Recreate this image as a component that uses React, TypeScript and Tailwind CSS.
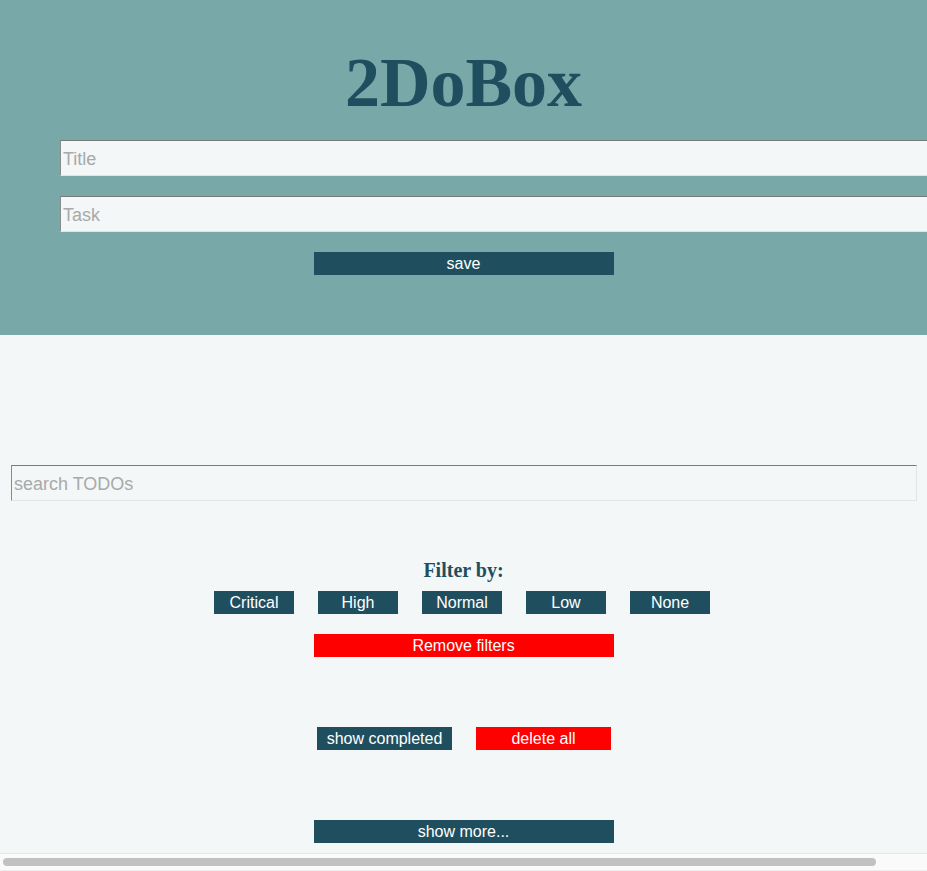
import React from "react";

const inputCls =
  "block h-[36px] bg-[#f3f7f7] border border-t-[#7a7a7a] border-l-[#8a8a8a] border-b-[#e4e4e4] border-r-[#e4e4e4] px-[2px] pt-[2px] text-[18px] text-[#333] placeholder:text-[#a9a9a9] outline-none font-['Liberation_Sans',Arial,sans-serif]";

const darkBtn =
  "h-[23px] bg-[#1f4f5f] text-white text-[16px] leading-[23px] text-center font-['Liberation_Sans',Arial,sans-serif]";
const redBtn =
  "h-[23px] bg-[#ff0000] text-white text-[16px] leading-[23px] text-center font-['Liberation_Sans',Arial,sans-serif]";

export default function App() {
  return (
    <div className="w-[927px] h-[871px] overflow-hidden bg-[#f3f7f7] flex flex-col">
      <header className="h-[335px] shrink-0 bg-[#78a8a8] flex flex-col overflow-hidden">
        <h1 className="mt-[43px] text-center text-[70px] leading-[80px] font-bold text-[#1f4f5f] font-['Liberation_Serif','Times_New_Roman',serif]">
          2DoBox
        </h1>
        <input className={inputCls + " ml-[60px] w-[924px] min-w-[924px] mt-[17px]"} placeholder="Title" />
        <input className={inputCls + " ml-[60px] w-[924px] min-w-[924px] mt-[20px]"} placeholder="Task" />
        <div className="flex justify-center mt-[20px]">
          <button className={darkBtn + " w-[300px]"}>save</button>
        </div>
      </header>
      <main className="flex-1 flex flex-col">
        <input className={inputCls + " ml-[11px] w-[906px] mt-[130px]"} placeholder="search TODOs" />
        <h2 className="mt-[58px] text-center text-[20px] leading-[23px] font-bold text-[#1f4f5f] font-['Liberation_Serif','Times_New_Roman',serif]">
          Filter by:
        </h2>
        <div className="flex justify-center gap-[24px] mt-[9px] pr-[3px]">
          {["Critical", "High", "Normal", "Low", "None"].map((t) => (
            <button key={t} className={darkBtn + " w-[80px]"}>
              {t}
            </button>
          ))}
        </div>
        <div className="flex justify-center mt-[20px]">
          <button className={redBtn + " w-[300px]"}>Remove filters</button>
        </div>
        <div className="flex justify-center gap-[24px] mt-[70px] pl-[1px]">
          <button className={darkBtn + " w-[135px]"}>show completed</button>
          <button className={redBtn + " w-[135px]"}>delete all</button>
        </div>
        <div className="flex justify-center mt-[70px]">
          <button className={darkBtn + " w-[300px]"}>show more...</button>
        </div>
      </main>
      <div className="h-[18px] shrink-0 bg-[#fafafa] border-t border-[#e6e6e6] border-b border-b-[#eeeeee] flex items-center pl-[3px]">
        <div className="h-[8px] w-[873px] rounded-full bg-[#c1c1c1]" />
      </div>
    </div>
  );
}
